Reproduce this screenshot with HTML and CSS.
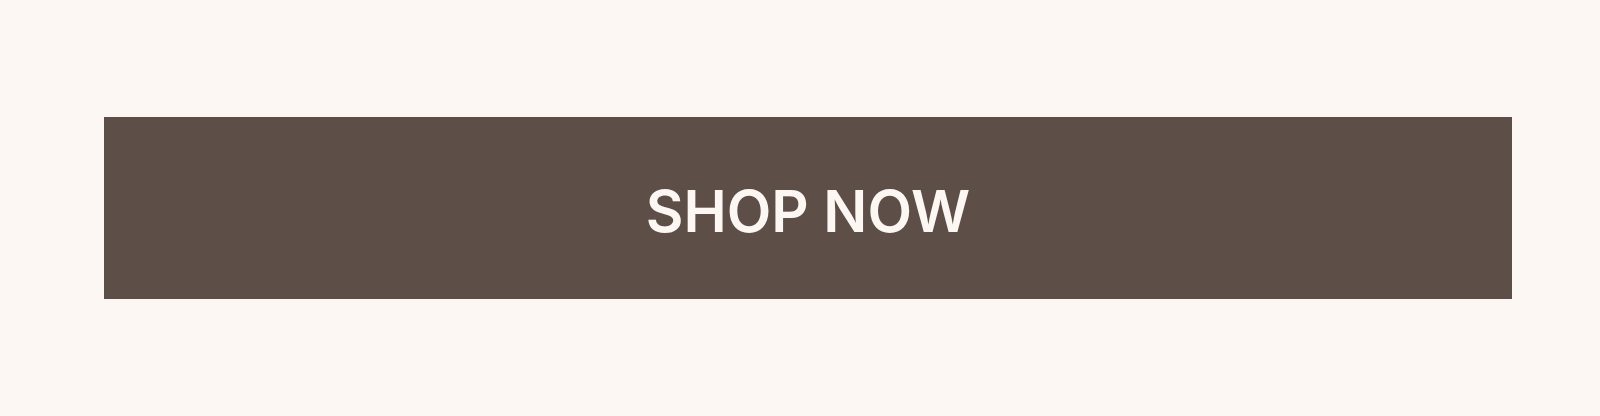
FILE: index.html
```html
<!DOCTYPE html>
<html lang="en">
<head>
<meta charset="utf-8">
<meta name="viewport" content="width=device-width, initial-scale=1">
<title>Shop now</title>
<link rel="stylesheet" href="styles.css">
</head>
<body>
<main class="cta">
<a class="cta-button" href="#shop">SHOP NOW</a>
</main>
</body>
</html>
```
FILE: styles.css
```css
body {
  margin: 0;
  background: #fcf7f3;
  font-family: Inter, "Liberation Sans", sans-serif;
}

.cta {
  display: flex;
  padding: 117px 88px 117px 104px;
}

.cta-button {
  flex: 1;
  padding: 58px 24px 52px;
  background: #5d4f47;
  color: #fcf7f3;
  font-size: 58px;
  font-weight: 600;
  line-height: 72px;
  text-align: center;
  text-decoration: none;
}
```
